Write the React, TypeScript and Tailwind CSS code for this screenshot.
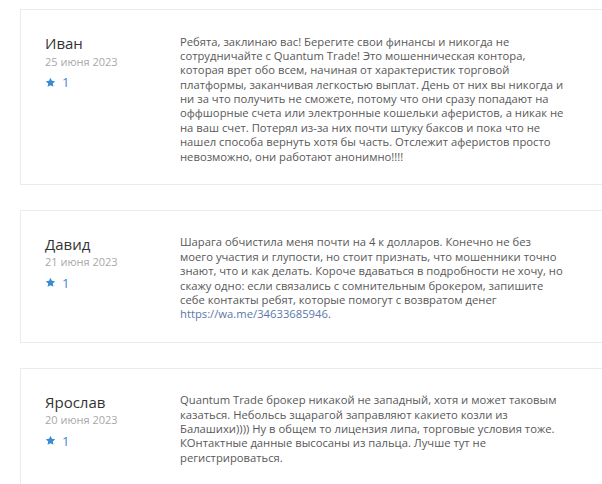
import React from "react";

type Review = {
  name: string;
  date: string;
  rating: number;
  text: string;
  link?: string;
};

const reviews: Review[] = [
  {
    name: "Иван",
    date: "25 июня 2023",
    rating: 1,
    text: "Ребята, заклинаю вас! Берегите свои финансы и никогда не сотрудничайте с Quantum Trade! Это мошенническая контора, которая врет обо всем, начиная от характеристик торговой платформы, заканчивая легкостью выплат. День от них вы никогда и ни за что получить не сможете, потому что они сразу попадают на оффшорные счета или электронные кошельки аферистов, а никак не на ваш счет. Потерял из-за них почти штуку баксов и пока что не нашел способа вернуть хотя бы часть. Отслежит аферистов просто невозможно, они работают анонимно!!!!",
  },
  {
    name: "Давид",
    date: "21 июня 2023",
    rating: 1,
    text: "Шарага обчистила меня почти на 4 к долларов. Конечно не без моего участия и глупости, но стоит признать, что мошенники точно знают, что и как делать. Короче вдаваться в подробности не хочу, но скажу одно: если связались с сомнительным брокером, запишите себе контакты ребят, которые помогут с возвратом денег",
    link: "https://wa.me/34633685946",
  },
  {
    name: "Ярослав",
    date: "20 июня 2023",
    rating: 1,
    text: "Quantum Trade брокер никакой не западный, хотя и может таковым казаться. Небольсь зщарагой заправляют какието козли из Балашихи)))) Ну в общем то лицензия липа, торговые условия тоже. КОнтактные данные высосаны из пальца. Лучше тут не регистрироваться.",
  },
];

const Star = () => (
  <svg viewBox="0 0 24 24" className="w-[11px] h-[11px]" fill="#3a8ad2">
    <path d="M12 1.8l3.1 6.6 7.2.9-5.3 5 1.4 7.1L12 17.9l-6.4 3.5 1.4-7.1-5.3-5 7.2-.9z" />
  </svg>
);

const ReviewCard = ({ review }: { review: Review }) => (
  <div className="flex border border-[#ebebeb] bg-white w-[640px] pt-[23px] pb-5 pl-6">
    <div className="w-[135px] shrink-0">
      <div className="text-[15px] leading-[20px] text-[#333]">{review.name}</div>
      <div className="text-[11px] leading-[14px] text-[#a8a8a8] mt-[1.5px]">
        {review.date}
      </div>
      <div className="flex items-center gap-[6px] mt-[5.5px] text-[13px] leading-[16px] text-[#3a8ad2]">
        <Star />
        <span>{review.rating}</span>
      </div>
    </div>
    <div className="w-[385px] text-[11.25px] leading-[14.375px] text-[#585858] pt-[1.5px]">
      {review.text}
      {review.link && (
        <>
          {" "}
          <a href={review.link} className="text-[#5b78a8]">
            {review.link}
          </a>
          .
        </>
      )}
    </div>
  </div>
);

export default function App() {
  return (
    <div
      className="w-[602px] h-[484px] overflow-hidden bg-white pl-5 pt-[9px]"
      style={{ fontFamily: '"Open Sans", sans-serif' }}
    >
      <div className="flex flex-col gap-[25px]">
        {reviews.map((r) => (
          <ReviewCard key={r.name} review={r} />
        ))}
      </div>
    </div>
  );
}
